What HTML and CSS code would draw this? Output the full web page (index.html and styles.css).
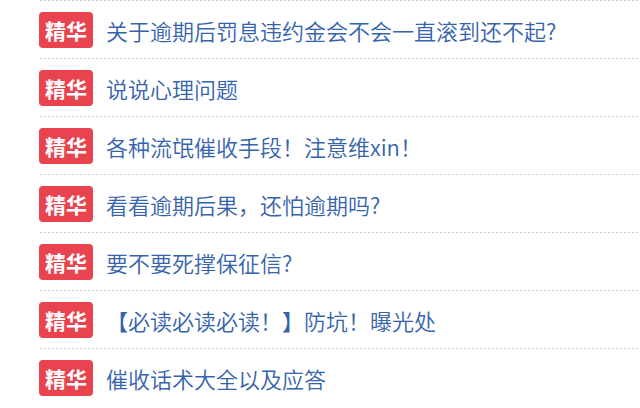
FILE: index.html
```html
<!DOCTYPE html>
<html lang="zh-CN">
<head>
<meta charset="utf-8">
<link rel="stylesheet" href="styles.css">
</head>
<body>
<ul class="list">
  <li class="row"><span class="badge">精华</span><span class="title">关于逾期后罚息违约金会不会一直滚到还不起?</span></li>
  <li class="row"><span class="badge">精华</span><span class="title">说说心理问题</span></li>
  <li class="row"><span class="badge">精华</span><span class="title">各种流氓催收手段！注意维xin！</span></li>
  <li class="row"><span class="badge">精华</span><span class="title">看看逾期后果，还怕逾期吗?</span></li>
  <li class="row"><span class="badge">精华</span><span class="title">要不要死撑保征信?</span></li>
  <li class="row"><span class="badge">精华</span><span class="title">【必读必读必读！】防坑！曝光处</span></li>
  <li class="row"><span class="badge">精华</span><span class="title">催收话术大全以及应答</span></li>
</ul>
</body>
</html>
```
FILE: styles.css
```css
html, body {
  margin: 0;
  padding: 0;
  background: #ffffff;
  width: 640px;
  height: 408px;
  overflow: hidden;
}
.list {
  list-style: none;
  margin: 0;
  padding: 0 0 0 39px;
}
.row {
  display: flex;
  align-items: center;
  height: 57px;
  padding-top: 1px;
  background-image: repeating-linear-gradient(to right, #c9ccd3 0 2px, transparent 2px 4px);
  background-size: 100% 1px;
  background-repeat: no-repeat;
  background-position: 1px 0;
}
.badge {
  flex: none;
  width: 54px;
  height: 36px;
  border-radius: 4px;
  background: #e8434f;
  color: #ffffff;
  font-family: "Noto Sans CJK SC", sans-serif;
  font-weight: 700;
  font-size: 21px;
  line-height: 36px;
  text-align: center;
  margin-right: 13px;
}
.title {
  font-family: "Noto Sans CJK SC", sans-serif;
  font-size: 22px;
  font-weight: 350;
  color: #3563ac;
  white-space: nowrap;
}
```
